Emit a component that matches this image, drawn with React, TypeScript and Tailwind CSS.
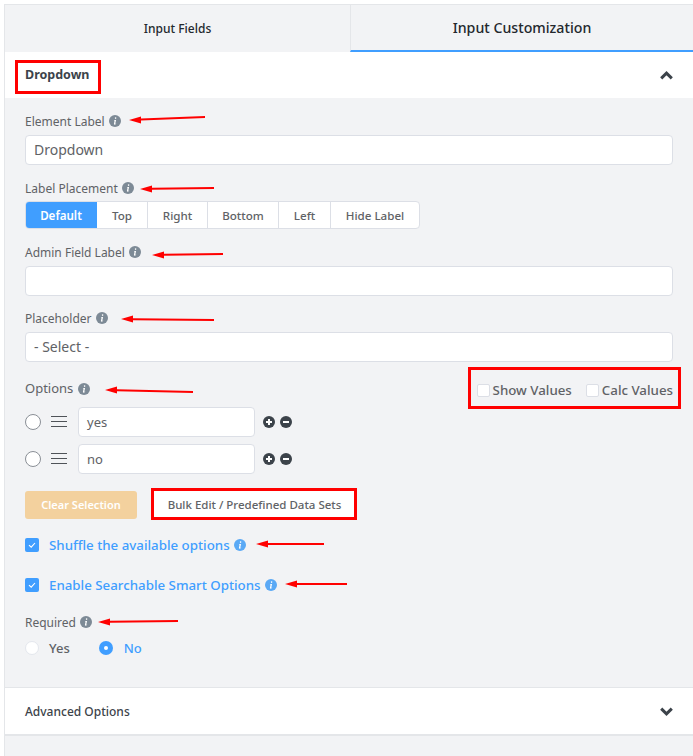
import React from "react";

function Chevron({ up }: { up: boolean }) {
  return (
    <svg viewBox="0 0 13 9" className="w-[13px] h-[9px] shrink-0">
      <path d={up ? "M1.2 7.4 6.5 2.2 11.8 7.4" : "M1.2 1.6 6.5 6.8 11.8 1.6"} stroke="#3c434a" strokeWidth="3" fill="none" />
    </svg>
  );
}

function Info({ blue = false }: { blue?: boolean }) {
  return (
    <svg viewBox="0 0 12 12" className="w-3 h-3 shrink-0">
      <circle cx="6" cy="6" r="6" fill={blue ? "#5AA9F5" : "#7d8a96"} />
      <path d="M6.6 2.3a.8.8 0 1 1-.01 1.6.8.8 0 0 1 .01-1.6ZM5 5h2.1L6.3 8.6c-.05.3.2.35.8-.1l.1.3c-.7.7-1.2.9-1.6.9-.5 0-.8-.3-.7-.8L5.6 5.6 5 5.5Z" fill="#fff" />
    </svg>
  );
}

function Label({ text, className }: { text: string; className: string }) {
  return (
    <div className={`flex items-center gap-[4px] h-[18px] text-xs text-[#606266] ${className}`}>
      <span className="pt-px">{text}</span>
      <Info />
    </div>
  );
}

function Field({ value }: { value?: string }) {
  return (
    <div className="h-[30px] bg-white border border-[#dcdfe6] rounded-[4px] px-2 flex items-center text-sm text-[#606266]">
      {value}
    </div>
  );
}

function OptionRow({ value, className }: { value: string; className: string }) {
  return (
    <div className={`flex items-center ${className}`}>
      <span className="w-4 h-4 rounded-full border border-[#8a8f96] bg-white shrink-0" />
      <svg viewBox="0 0 16 12" className="w-4 h-3 ml-[10px] shrink-0">
        <path d="M0 .5h16M0 5.5h16M0 10.5h16" stroke="#4f5358" strokeWidth="1" />
      </svg>
      <div className="ml-[11px] w-[177px] h-[30px] bg-white border border-[#dcdfe6] rounded-[4px] px-2 pt-px flex items-center text-[13px] text-[#606266]">
        {value}
      </div>
      <svg viewBox="0 0 12 12" className="w-3 h-3 ml-[8px]">
        <circle cx="6" cy="6" r="6" fill="#3c434a" />
        <path d="M6 3v6M3 6h6" stroke="#fff" strokeWidth="2" />
      </svg>
      <svg viewBox="0 0 12 12" className="w-3 h-3 ml-[5px]">
        <circle cx="6" cy="6" r="6" fill="#3c434a" />
        <path d="M3 6h6" stroke="#fff" strokeWidth="2" />
      </svg>
    </div>
  );
}

function CheckRow({ text, className }: { text: string; className: string }) {
  return (
    <div className={`flex items-center h-[18px] text-[13.3px] font-medium text-[#409eff] ${className}`}>
      <span className="w-[14px] h-[14px] bg-[#409eff] rounded-[2px] flex items-center justify-center shrink-0">
        <svg viewBox="0 0 10 10" className="w-[10px] h-[10px]">
          <path d="M2 5.2 4.2 7.2 8 3" stroke="#fff" strokeWidth="1.1" fill="none" />
        </svg>
      </span>
      <span className="ml-[10px] pt-px">{text}</span>
      <span className="ml-[4px]">
        <Info blue />
      </span>
    </div>
  );
}

function Segment({ text, className }: { text: string; className: string }) {
  return (
    <div className={`h-full pt-px flex items-center justify-center text-[11.6px] font-medium border-r border-[#dcdfe6] text-[#606266] ${className}`}>
      {text}
    </div>
  );
}

function Arrow({ tip, tail, y1, y2 }: { tip: number; tail: number; y1: number; y2: number }) {
  const head = tip + 12;
  return (
    <polygon
      fill="#f00"
      points={`${tip},${y1} ${head},${y1 - 3.5} ${head},${y1 + (y2 - y1) * 0.15 - 1} ${tail},${y2 - 1} ${tail},${y2 + 1} ${head},${y1 + (y2 - y1) * 0.15 + 1} ${head},${y1 + 3.5}`}
    />
  );
}

export default function App() {
  return (
    <div className="relative w-[693px] h-[756px] overflow-hidden bg-white font-['Noto_Sans','Open_Sans',sans-serif]">
      <div className="h-full ml-1 mt-1 border-l border-t border-[#e4e6e9] bg-[#f2f3f5] flex flex-col">
        <div className="flex h-[47px] shrink-0">
          <div className="w-[345px] flex items-center justify-center text-xs font-medium text-[#23282d] pt-px">
            Input Fields
          </div>
          <div className="flex-1 border-b-2 border-l border-b-[#409eff] border-l-[#e4e6e9] flex items-center justify-center text-[14.2px] font-medium text-[#23282d] pt-px">
            Input Customization
          </div>
        </div>

        <div className="h-[46px] shrink-0 bg-white flex items-center justify-between pl-5 pr-[20px]">
          <span className="text-[12.5px] font-bold text-[#3c434a] pt-px">Dropdown</span>
          <Chevron up />
        </div>

        <div className="h-[589px] shrink-0 pl-5 pr-[20px] flex flex-col">
          <Label text="Element Label" className="mt-[14px]" />
          <div className="mt-[5px]"><Field value="Dropdown" /></div>

          <Label text="Label Placement" className="mt-[14px]" />
          <div className="mt-[4px] flex h-[28px] w-[395px] bg-white border border-[#dcdfe6] rounded-[4px] overflow-hidden">
            <div className="w-[72px] -ml-px h-full pt-px bg-[#409eff] text-white text-[11.6px] font-semibold flex items-center justify-center">Default</div>
            <Segment text="Top" className="w-[51px]" />
            <Segment text="Right" className="w-[60px]" />
            <Segment text="Bottom" className="w-[71px]" />
            <Segment text="Left" className="w-[52px]" />
            <div className="flex-1 pt-px flex items-center justify-center text-[11.6px] font-medium text-[#606266]">Hide Label</div>
          </div>

          <Label text="Admin Field Label" className="mt-[14px]" />
          <div className="mt-[5px]"><Field /></div>

          <Label text="Placeholder" className="mt-[13px]" />
          <div className="mt-[5px]"><Field value="- Select -" /></div>

          <div className="mt-[18px] h-[18px] flex items-center justify-between">
            <div className="flex items-center gap-[5px] text-[13px] text-[#606266]">
              <span>Options</span>
              <Info />
            </div>
            <div className="flex items-center text-[13.3px] font-medium text-[#606266] mt-[3px]">
              <span className="w-[13px] h-[13px] bg-white border border-[#dcdfe6] rounded-[2px] mr-[3px]" />
              <span>Show Values</span>
              <span className="w-[13px] h-[13px] bg-white border border-[#dcdfe6] rounded-[2px] ml-[14px] mr-[3px]" />
              <span>Calc Values</span>
            </div>
          </div>

          <OptionRow value="yes" className="mt-[9px]" />
          <OptionRow value="no" className="mt-[7px]" />

          <div className="mt-[17px] flex items-center h-[28px]">
            <div className="w-[112px] h-full rounded-[3px] bg-[#f3d19e] text-white text-[11px] font-semibold flex items-center justify-center">
              Clear Selection
            </div>
            <div className="ml-[16px] w-[203px] h-full bg-white flex items-center justify-center text-[11.5px] font-medium text-[#606266]">
              Bulk Edit / Predefined Data Sets
            </div>
          </div>

          <CheckRow text="Shuffle the available options" className="mt-[17px]" />
          <CheckRow text="Enable Searchable Smart Options" className="mt-[22px]" />

          <Label text="Required" className="mt-[19px]" />
          <div className="mt-[8px] flex items-center h-[18px] text-[13px] font-medium">
            <span className="w-[14px] h-[14px] rounded-full bg-white border border-[#e4e7ed]" />
            <span className="ml-[10px] pt-px text-[#606266]">Yes</span>
            <span className="ml-[29px] w-[14px] h-[14px] rounded-full bg-[#409eff] flex items-center justify-center">
              <span className="w-1 h-1 rounded-full bg-white" />
            </span>
            <span className="ml-[11px] pt-px text-[#409eff]">No</span>
          </div>
        </div>

        <div className="h-[49px] shrink-0 bg-white border-t border-b-2 border-t-[#e4e6e9] border-b-[#e4e6e9] flex items-center justify-between pl-5 pr-[20px]">
          <span className="text-xs font-medium text-[#3c434a] pt-px">Advanced Options</span>
          <Chevron up={false} />
        </div>
      </div>

      {/* Red review annotations drawn over the page */}
      <svg viewBox="0 0 693 756" className="absolute inset-0 w-[693px] h-[756px] pointer-events-none">
        <g fill="none" stroke="#f00" strokeWidth="3">
          <rect x="16.5" y="61.5" width="83" height="31" />
          <rect x="469.5" y="368.5" width="210" height="39" />
          <rect x="152.5" y="489.5" width="203" height="29" />
        </g>
        <Arrow tip={129} tail={205} y1={120} y2={117} />
        <Arrow tip={140} tail={214} y1={189} y2={188} />
        <Arrow tip={152} tail={223} y1={255} y2={254} />
        <Arrow tip={121} tail={214} y1={319} y2={320} />
        <Arrow tip={105} tail={193} y1={390} y2={392} />
        <Arrow tip={256} tail={324} y1={544} y2={544} />
        <Arrow tip={285} tail={347} y1={584} y2={584} />
        <Arrow tip={98} tail={178} y1={622} y2={621} />
      </svg>
    </div>
  );
}
